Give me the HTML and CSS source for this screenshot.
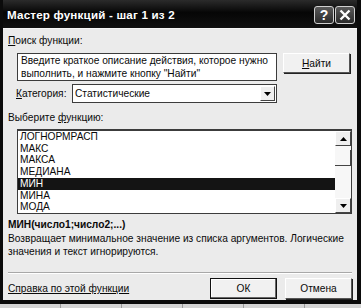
FILE: index.html
```html
<!DOCTYPE html>
<html lang="ru">
<head>
    <meta charset="UTF-8">
    <title>Мастер функций - шаг 1 из 2</title>
    <link rel="stylesheet" href="styles.css">
</head>
<body>

    <div class="window">
        <div class="titlebar">
            <span class="title">Мастер функций - шаг 1 из 2</span>
            <div class="caption-btns">
                <span class="cap-btn">?</span>
                <span class="cap-btn">
                    <svg width="12" height="12" viewBox="0 0 12 12">
                        <path d="M1.5 1.5 L10.5 10.5 M10.5 1.5 L1.5 10.5" stroke="#fff" stroke-width="2.4" fill="none"/>
                    </svg>
                </span>
            </div>
        </div>

        <div class="client">
            <div class="label"><u>П</u>оиск функции:</div>

            <div class="search-row">
                <div class="search-box">Введите краткое описание действия, которое нужно<br>выполнить, и нажмите кнопку "Найти"</div>
                <button class="btn find-btn"><u>Н</u>айти</button>
            </div>

            <div class="cat-row">
                <span class="cat-label"><u>К</u>атегория:</span>
                <div class="select">
                    <span>Статистические</span>
                    <span class="drop-btn">
                        <svg width="7" height="4" viewBox="0 0 7 4"><path d="M0 0 H7 L3.5 4 Z" fill="#000"/></svg>
                    </span>
                </div>
            </div>

            <div class="label list-label">Выберите <u>ф</u>ункцию:</div>

            <div class="list">
                <ul class="items">
                    <li>ЛОГНОРМРАСП</li>
                    <li>МАКС</li>
                    <li>МАКСА</li>
                    <li>МЕДИАНА</li>
                    <li class="selected">МИН</li>
                    <li>МИНА</li>
                    <li>МОДА</li>
                </ul>
                <div class="scrollbar">
                    <span class="sb-btn">
                        <svg width="7" height="4" viewBox="0 0 7 4"><path d="M0 4 H7 L3.5 0 Z" fill="#000"/></svg>
                    </span>
                    <div class="sb-track"><span class="sb-thumb"></span></div>
                    <span class="sb-btn">
                        <svg width="7" height="4" viewBox="0 0 7 4"><path d="M0 0 H7 L3.5 4 Z" fill="#000"/></svg>
                    </span>
                </div>
            </div>

            <div class="sig">МИН(число1;число2;...)</div>
            <div class="desc">Возвращает минимальное значение из списка аргументов. Логические<br>значения и текст игнорируются.</div>

            <div class="sep"></div>

            <div class="footer">
                <a class="help-link" href="#">Справка по этой функции</a>
                <button class="btn ok-btn">ОК</button>
                <button class="btn">Отмена</button>
            </div>
        </div>
    </div>
    <div class="sheet"></div>

</body>
</html>
```

FILE: styles.css
```css
body {
    margin: 0;
    width: 361px;
    height: 308px;
    overflow: hidden;
    background: #cfcfcf;
    font-family: "Liberation Sans", Tahoma, sans-serif;
    font-size: 10.2px;
    color: #0a0a0a;
}

.window {
    height: 304px;
    box-sizing: border-box;
    background: #0b0b0b;
    padding: 0 4px 4px 3px;
    display: flex;
    flex-direction: column;
}

.titlebar {
    height: 28px;
    flex-shrink: 0;
    display: flex;
    align-items: center;
    justify-content: space-between;
    padding: 0 2px 0 4px;
    background: linear-gradient(#2b2b2b, #060606 45%, #111);
}
.title {
    color: #fff;
    font-weight: bold;
    font-size: 11.6px;
    letter-spacing: 0.2px;
}
.caption-btns {
    display: flex;
    gap: 1px;
    margin-top: 1px;
}
.cap-btn {
    width: 18px;
    height: 16px;
    border: 1px solid #d0d0d0;
    border-radius: 3px;
    background: linear-gradient(#5a5a5a, #2a2a2a);
    color: #fff;
    font-weight: bold;
    font-size: 14px;
    display: flex;
    align-items: center;
    justify-content: center;
}

.client {
    flex: 1;
    min-height: 0;
    background: #ebebeb;
    padding: 5px 5px 0 5px;
    border-top: 1px solid #f6f6f6;
}
.label {
    line-height: 13px;
}

.search-row {
    display: flex;
    align-items: flex-start;
    margin-top: 6px;
    padding-left: 9px;
}
.search-box {
    width: 260px;
    height: 28px;
    box-sizing: border-box;
    background: #fff;
    border: 1px solid #3c3c3c;
    padding: 0 3px;
    line-height: 13px;
    white-space: nowrap;
}

.btn {
    font-family: inherit;
    font-size: 10.2px;
    color: #0a0a0a;
    background: #f1f1f1;
    border: 1px solid #fff;
    border-right-color: #555;
    border-bottom-color: #555;
    box-shadow: 1px 1px 0 #222;
    height: 20px;
    padding: 0;
}
.find-btn {
    width: 67px;
    margin-left: auto;
    margin-right: 2px;
}

.cat-row {
    display: flex;
    align-items: center;
    margin-top: 3px;
    padding-left: 8px;
}
.cat-label {
    width: 56px;
}
.select {
    width: 205px;
    height: 19px;
    box-sizing: border-box;
    background: #fff;
    border: 1px solid #3c3c3c;
    display: flex;
    align-items: center;
    justify-content: space-between;
    padding: 0 1px 0 2px;
}
.drop-btn, .sb-btn {
    width: 15px;
    height: 15px;
    box-sizing: border-box;
    background: #efefef;
    border: 1px solid #fff;
    border-right-color: #444;
    border-bottom-color: #444;
    display: flex;
    align-items: center;
    justify-content: center;
}

.list-label {
    margin-top: 8px;
}
.list {
    margin: 5px 0 0 9px;
    height: 85px;
    box-sizing: border-box;
    background: #fff;
    border: 1px solid #3c3c3c;
    border-top-width: 2px;
    display: flex;
}
.items {
    list-style: none;
    margin: 0;
    padding: 0;
    flex: 1;
}
.items li {
    line-height: 11.7px;
    padding-left: 2px;
}
.items .selected {
    background: #141414;
    color: #fff;
}
.scrollbar {
    width: 16px;
    display: flex;
    flex-direction: column;
    background: #f7f7f7;
}
.sb-btn {
    width: 16px;
    height: 15px;
}
.sb-track {
    flex: 1;
    padding-top: 4px;
}
.sb-thumb {
    display: block;
    height: 16px;
    box-sizing: border-box;
    border-right: 1px solid #444;
    border-bottom: 1px solid #444;
    background: #f7f7f7;
}

.sig {
    margin-top: 4px;
    font-weight: bold;
    line-height: 13px;
}
.desc {
    margin-top: 1px;
    line-height: 13px;
    white-space: nowrap;
}

.sep {
    margin-top: 14px;
    height: 1px;
    background: #a8a8a8;
    border-bottom: 1px solid #fff;
}

.footer {
    display: flex;
    align-items: center;
    margin-top: 4px;
}
.help-link {
    color: #0a0a0a;
    text-decoration: underline;
    margin-right: auto;
}
.footer .btn {
    width: 67px;
    height: 21px;
}
.ok-btn {
    margin-right: 8px;
    border: 1px solid #111;
    box-shadow: inset -1px -1px 0 #666, inset 1px 1px 0 #fff;
}

.sheet {
    height: 4px;
    background: repeating-linear-gradient(to right, #d4d4d4 0, #d4d4d4 60px, #9a9a9a 60px, #9a9a9a 61px);
}
```
